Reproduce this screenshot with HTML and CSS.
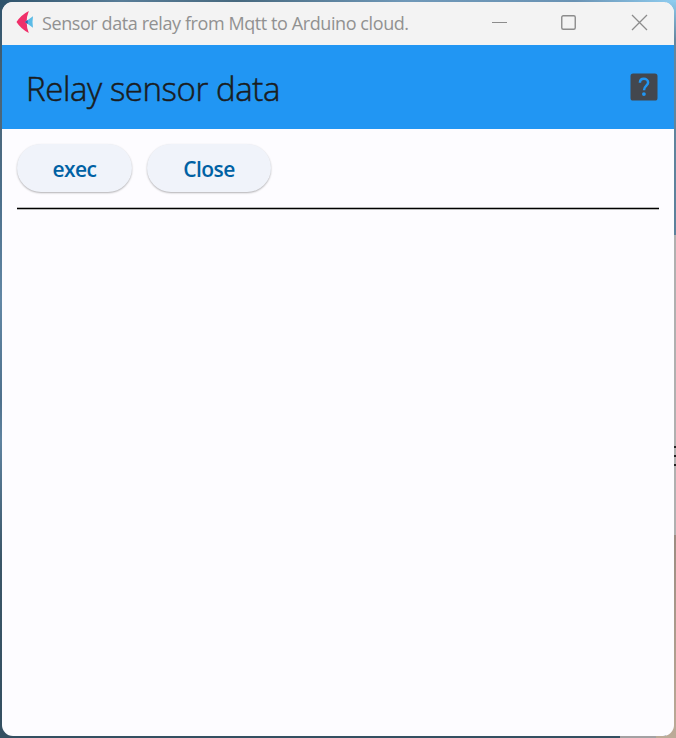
FILE: index.html
```html
<!DOCTYPE html>
<html lang="en">
<head>
<meta charset="utf-8">
<title>Sensor data relay from Mqtt to Arduino cloud.</title>
<link rel="stylesheet" href="styles.css">
</head>
<body>
<div class="desktop">
  <main class="window">
    <header class="titlebar">
      <svg class="logo" width="18" height="22" viewBox="0 0 18 22">
        <path d="M12.8 0Q8.5 11 12.8 22Q5 18 .5 11Q5 4 12.8 0Z" fill="#f0306a"/>
        <path d="M9 11L17 5.3Q16 11 17 16.7Z" fill="#5bbbe6"/>
        <path d="M9 11L11.7 9V13Z" fill="#2b63a8"/>
      </svg>
      <span class="caption">Sensor data relay from Mqtt to Arduino cloud.</span>
      <svg class="controls" width="158" height="18" viewBox="0 0 158 18" fill="none" stroke="#8c8c8c">
        <path d="M0 8.5H15" stroke-width="1"/>
        <rect x="69.75" y="1.75" width="13.5" height="13.5" rx="1.5" stroke-width="1.4"/>
        <path d="M140 1L155 16M155 1L140 16" stroke-width="1.3"/>
      </svg>
    </header>
    <div class="appbar">
      <h1 class="title">Relay sensor data</h1>
      <svg class="help" width="28" height="28" viewBox="0 0 28 28">
        <rect x=".5" y=".5" width="27" height="27" rx="2.6" fill="#43474e"/>
        <path d="M9.9 9.7C9.9 7.2 11.6 5.8 13.9 5.8S18.1 7.4 18.1 9.5C18.1 12.6 14 12.8 14 17.2" fill="none" stroke="#2196f3" stroke-width="2.5"/>
        <circle cx="13.9" cy="21.1" r="1.9" fill="#2196f3"/>
      </svg>
    </div>
    <div class="content">
      <div class="buttons">
        <button class="btn exec"><span>exec</span></button>
        <button class="btn close"><span>Close</span></button>
      </div>
      <div class="divider"></div>
    </div>
  </main>
  <div class="edge"><i></i><i></i><i></i></div>
</div>
</body>
</html>
```
FILE: styles.css
```css
* { box-sizing: border-box; }
body { margin: 0; font-family: "Open Sans", sans-serif; }
.desktop {
  position: relative;
  width: 676px;
  height: 738px;
  padding: 2px;
  overflow: hidden;
  background:
    linear-gradient(90deg, #2f536b, #587d98 18%, #47697f 35%, #6f98b8 60%, #6a93b4 85%, #8fcdf0) 0 0 / 100% 2px no-repeat,
    linear-gradient(90deg, #344f61 0 620px, #a3a1a3 620px 656px, #bcab98 656px) 0 100% / 100% 2px no-repeat,
    linear-gradient(#8fcdf0 0, #64869e 40px, #5b819b 235px, #b0b0b0 235px 535px, #9b8c82 535px, #bcab98 738px) 100% 0 / 10px 100% no-repeat,
    linear-gradient(#2f536b 0, #4b6578 100px, #4d708c 200px, #6287a5 300px, #4f718d 400px, #5f83a0 440px, #3b5668 560px, #344f61 738px);
}
.window {
  width: 672px;
  height: 734px;
  border-radius: 11px;
  overflow: hidden;
  background: #fdfcff;
}
.titlebar {
  height: 43px;
  display: flex;
  align-items: center;
  padding: 0 24px 0 14px;
  background: #f3f3f3;
}
.logo { margin-top: -3px; }
.caption {
  margin: -2px 0 0 8px;
  font-size: 18px;
  line-height: 24px;
  color: #919191;
  white-space: nowrap;
  letter-spacing: -0.41px;
}
.controls { margin: -2px 0 0 auto; }
.appbar {
  height: 84px;
  display: flex;
  align-items: center;
  justify-content: space-between;
  padding: 0 16px 0 24px;
  background: #2196f3;
}
.title {
  margin: 4px 0 0;
  font-size: 33px;
  font-weight: 300;
  line-height: 42px;
  color: #1a1c1e;
  letter-spacing: -0.42px;
  -webkit-text-stroke: 0.5px #1a1c1e;
}
.content { padding: 15px; }
.buttons { display: flex; gap: 15px; }
.btn {
  height: 48px;
  padding: 2px 0 0;
  border: 0;
  border-radius: 24px;
  background: #f0f3fa;
  box-shadow: 0 1px 2px rgba(0, 0, 0, .3);
  color: #0061a4;
  font: 600 21px/28px "Open Sans", sans-serif;
  letter-spacing: -0.6px;
}
.exec { width: 115px; }
.close { width: 124px; }
.divider {
  height: 3px;
  margin-top: 15px;
  width: 642px;
  background: linear-gradient(#b8b8b8 0 1px, #000 1px 2px, #b8b8b8 2px);
}
.edge {
  position: absolute;
  left: 674px;
  top: 446px;
  display: grid;
  gap: 7px;
}
.edge i { width: 2px; height: 2px; background: #222; }
```
